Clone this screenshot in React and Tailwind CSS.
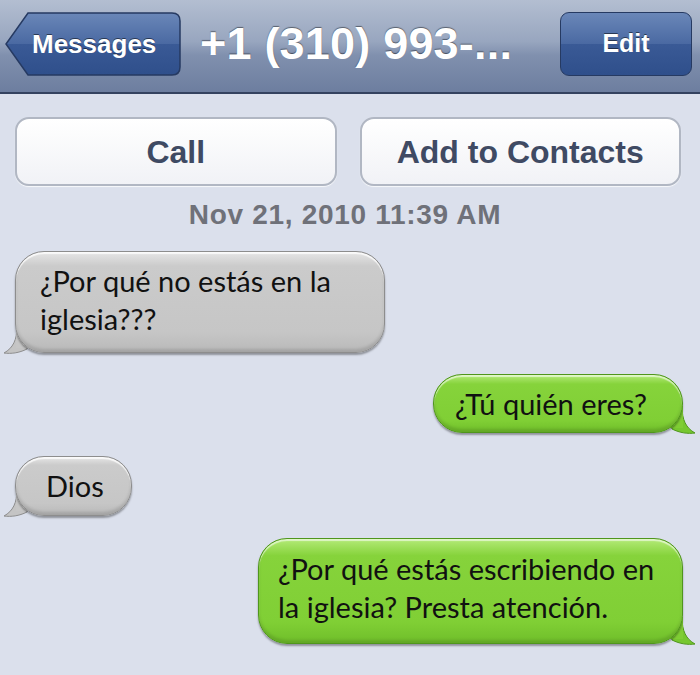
const grayBubble =
  'bg-[linear-gradient(to_bottom,#e6e6e6_0%,#cbcbcb_14%,#c6c6c6_80%,#b9b9b9_100%)] border border-[#8d8d8d] shadow-[inset_0_2px_1px_rgba(255,255,255,0.8),inset_0_-3px_3px_rgba(0,0,0,0.12),0_2px_2px_rgba(0,0,0,0.35)]'
const greenBubble =
  'bg-[linear-gradient(to_bottom,#b4ea78_0%,#86d33b_16%,#80cf35_80%,#6fbe2a_100%)] border border-[#4f961c] shadow-[inset_0_2px_1px_rgba(255,255,255,0.6),inset_0_-3px_3px_rgba(0,0,0,0.12),0_2px_2px_rgba(0,0,0,0.35)]'

function Tail({ side }) {
  if (side === 'left') {
    return (
      <svg className="absolute left-[-12px] bottom-[-1px]" width="26" height="28" viewBox="0 0 26 28">
        <path d="M14 0 C14 14 10 22 1 27 C8 28 16 27 24 23 L26 10 Z" fill="#c4c4c4" stroke="#8d8d8d" strokeWidth="1" />
        <rect x="13" y="0" width="13" height="22" fill="#c6c6c6" />
      </svg>
    )
  }
  return (
    <svg className="absolute right-[-13px] bottom-[-1px]" width="26" height="28" viewBox="0 0 26 28">
      <path d="M12 0 C12 14 16 22 25 27 C18 28 10 27 2 23 L0 10 Z" fill="#76c72f" stroke="#4f961c" strokeWidth="1" />
      <rect x="0" y="0" width="13" height="22" fill="#7fcd34" />
    </svg>
  )
}

function Bubble({ side, className, children }) {
  const skin = side === 'left' ? grayBubble : greenBubble
  return (
    <div className={`relative ${className}`}>
      <Tail side={side} />
      <div className={`relative rounded-[29px] ${skin} text-[29px] leading-[38px] text-[#111] font-['Lato','Noto_Sans',sans-serif]`}>
        {children}
      </div>
    </div>
  )
}

function NavBar() {
  return (
    <div className="h-[94px] bg-[linear-gradient(to_bottom,#b3bed1_0%,#98a6bf_45%,#8090ae_60%,#6d7e9f_100%)] border-b-2 border-[#34425f] flex items-start pt-[12px] pl-[5px] pr-[8px]">
      <div className="relative w-[176px] h-[64px] shrink-0">
        <svg className="absolute inset-0" width="176" height="64" viewBox="0 0 176 64">
          <defs>
            <linearGradient id="navbtn" x1="0" y1="0" x2="0" y2="1">
              <stop offset="0" stopColor="#6a87b8" />
              <stop offset="0.5" stopColor="#4a69a2" />
              <stop offset="0.5" stopColor="#3a5a96" />
              <stop offset="1" stopColor="#2f4f8b" />
            </linearGradient>
          </defs>
          <path d="M23 1 H167 Q175 1 175 9 V55 Q175 63 167 63 H23 L1 32 Z" fill="url(#navbtn)" stroke="#263a62" strokeWidth="1.5" />
        </svg>
        <div className="relative h-full flex items-center pl-[27px] text-[26px] font-bold text-white [text-shadow:0_-1px_0_rgba(0,0,0,0.5)]">
          Messages
        </div>
      </div>
      <div className="ml-[19px] h-[64px] flex items-center text-[45px] font-bold text-white tracking-[0.2px] [text-shadow:0_-1px_1px_rgba(0,0,0,0.45)]">
        +1 (310) 993-...
      </div>
      <div className="ml-auto w-[132px] h-[64px] rounded-[9px] border-[1.5px] border-[#263a62] bg-[linear-gradient(to_bottom,#6a87b8_0%,#4a69a2_50%,#3a5a96_50%,#2f4f8b_100%)] flex items-center justify-center text-[25px] font-bold text-white [text-shadow:0_-1px_0_rgba(0,0,0,0.5)]">
        Edit
      </div>
    </div>
  )
}

export default function App() {
  return (
    <div className="w-[700px] h-[675px] overflow-hidden bg-[#dbe0ec] font-['Liberation_Sans',Arial,sans-serif]">
      <NavBar />
      <div className="flex gap-[23px] pl-[15px] pr-[19px] mt-[23px]">
        <div className="flex-1 h-[69px] rounded-[14px] border-2 border-[#b1b7c3] bg-[linear-gradient(to_bottom,#ffffff,#f1f2f6)] shadow-[0_1px_1px_rgba(255,255,255,0.8)] flex items-center justify-center text-[32px] font-bold text-[#3f4a63]">
          Call
        </div>
        <div className="flex-1 h-[69px] rounded-[14px] border-2 border-[#b1b7c3] bg-[linear-gradient(to_bottom,#ffffff,#f1f2f6)] shadow-[0_1px_1px_rgba(255,255,255,0.8)] flex items-center justify-center text-[32px] font-bold text-[#3f4a63]">
          Add to Contacts
        </div>
      </div>
      <div className="mt-[12px] text-center text-[28px] tracking-[0.7px] font-bold text-[#6f7179] leading-[34px] pr-[10px]">
        Nov 21, 2010 11:39 AM
      </div>
      <div className="flex flex-col mt-[19px] px-[15px]">
        <Bubble side="left" className="self-start w-[370px]">
          <div className="pl-[24px] pr-[10px] pt-[10px] pb-[13px] h-[100px]">
            ¿Por qué no estás en la
            <br />
            iglesia???
          </div>
        </Bubble>
        <Bubble side="right" className="self-end mt-[21px] mr-[2px] w-[250px]">
          <div className="h-[57px] pl-[21px] flex items-center">¿Tú quién eres?</div>
        </Bubble>
        <Bubble side="left" className="self-start mt-[23px] w-[117px]">
          <div className="h-[58px] pl-[30px] flex items-center">Dios</div>
        </Bubble>
        <Bubble side="right" className="self-end mt-[22px] mr-[2px] w-[425px]">
          <div className="h-[104px] pl-[19px] pt-[11px] whitespace-nowrap">
            ¿Por qué estás escribiendo en
            <br />
            la iglesia? Presta atención.
          </div>
        </Bubble>
      </div>
    </div>
  )
}
